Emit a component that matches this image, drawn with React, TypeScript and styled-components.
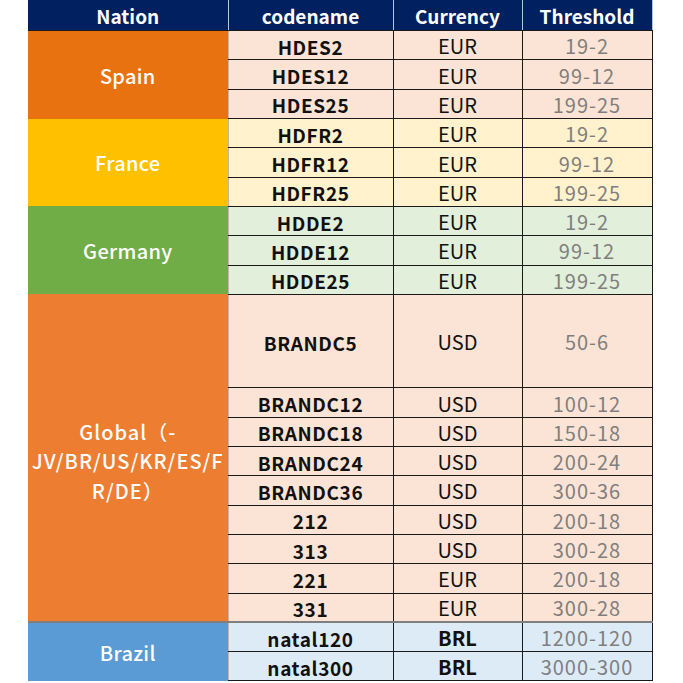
import React from "react";
import styled, { createGlobalStyle } from "styled-components";

const Global = createGlobalStyle`
  html, body { margin: 0; padding: 0; background: #ffffff; }
  body { font-family: "Noto Sans CJK SC", "Noto Sans", sans-serif; }
`;

type RowData = { code: string; cur: string; th: string; tall?: boolean };
type Group = {
  name: React.ReactNode;
  color: string;
  bg: string;
  boldCur?: boolean;
  lastSep?: boolean;
  wide?: boolean;
  rows: RowData[];
};

const groups: Group[] = [
  {
    name: "Spain",
    color: "#E8720F",
    bg: "#FBE4D5",
    rows: [
      { code: "HDES2", cur: "EUR", th: "19-2" },
      { code: "HDES12", cur: "EUR", th: "99-12" },
      { code: "HDES25", cur: "EUR", th: "199-25" },
    ],
  },
  {
    name: "France",
    color: "#FFC000",
    bg: "#FFF2CC",
    rows: [
      { code: "HDFR2", cur: "EUR", th: "19-2" },
      { code: "HDFR12", cur: "EUR", th: "99-12" },
      { code: "HDFR25", cur: "EUR", th: "199-25" },
    ],
  },
  {
    name: "Germany",
    color: "#70AD47",
    bg: "#E2EFDA",
    rows: [
      { code: "HDDE2", cur: "EUR", th: "19-2" },
      { code: "HDDE12", cur: "EUR", th: "99-12" },
      { code: "HDDE25", cur: "EUR", th: "199-25" },
    ],
  },
  {
    name: (
      <>
        Global（-
        <br />
        JV/BR/US/KR/ES/F
        <br />
        R/DE）
      </>
    ),
    color: "#ED7D31",
    bg: "#FBE4D5",
    lastSep: true,
    wide: true,
    rows: [
      { code: "BRANDC5", cur: "USD", th: "50-6", tall: true },
      { code: "BRANDC12", cur: "USD", th: "100-12" },
      { code: "BRANDC18", cur: "USD", th: "150-18" },
      { code: "BRANDC24", cur: "USD", th: "200-24" },
      { code: "BRANDC36", cur: "USD", th: "300-36" },
      { code: "212", cur: "USD", th: "200-18" },
      { code: "313", cur: "USD", th: "300-28" },
      { code: "221", cur: "EUR", th: "200-18" },
      { code: "331", cur: "EUR", th: "300-28" },
    ],
  },
  {
    name: "Brazil",
    color: "#5B9BD5",
    bg: "#DDEBF7",
    boldCur: true,
    rows: [
      { code: "natal120", cur: "BRL", th: "1200-120" },
      { code: "natal300", cur: "BRL", th: "3000-300" },
    ],
  },
];

const Page = styled.div`
  padding-left: 28px;
`;

const Table = styled.table`
  border-collapse: collapse;
  table-layout: fixed;
  width: 624px;
`;

const HeadRow = styled.tr`
  height: 30.7px;
`;

const Th = styled.th`
  background: #002060;
  color: #ffffff;
  font-size: 19px;
  font-weight: 700;
  padding: 1px 0 0;
  line-height: 1;
  text-align: center;
  vertical-align: middle;
  border-right: 1px solid #b4c7e7;
  border-bottom: 1px solid #1a1a1a;
`;

const Row = styled.tr<{ $tall?: boolean }>`
  height: ${(p) => (p.$tall ? "93.6px" : "29.3px")};
`;

const NationCell = styled.td<{ $bg: string; $sep?: boolean }>`
  background: ${(p) => p.$bg};
  color: #ffffff;
  font-size: 20px;
  font-weight: 500;
  line-height: 29.5px;
  text-align: center;
  vertical-align: middle;
  padding: 0;
  border-bottom: ${(p) => (p.$sep ? "2px solid #7f7f7f" : "none")};
`;

const NationLabel = styled.div<{ $wide?: boolean }>`
  letter-spacing: ${(p) => (p.$wide ? "1px" : "0.3px")};
  padding-top: ${(p) => (p.$wide ? "6px" : "1px")};
  white-space: nowrap;
`;

const Td = styled.td<{
  $bg: string;
  $sep?: boolean;
  $first?: boolean;
}>`
  background: ${(p) => p.$bg};
  line-height: 1;
  text-align: center;
  vertical-align: middle;
  padding: 2px 0 0;
  border-right: 1px solid #1a1a1a;
  border-left: ${(p) => (p.$first ? "1px solid #c9b3a6" : "1px solid #1a1a1a")};
  border-bottom: ${(p) => (p.$sep ? "2px solid #7f7f7f" : "1px solid #1a1a1a")};
`;

const Code = styled.span`
  color: #111111;
  font-size: 19px;
  font-weight: 700;
  letter-spacing: 0.6px;
`;

const Currency = styled.span<{ $bold?: boolean }>`
  color: #111111;
  font-size: 20px;
  font-weight: ${(p) => (p.$bold ? 700 : 400)};
`;

const Threshold = styled.span`
  color: #7f7f7f;
  font-size: 20px;
  font-weight: 400;
  letter-spacing: 1px;
`;

export default function App() {
  return (
    <Page>
      <Global />
      <Table>
        <colgroup>
          <col style={{ width: 200 }} />
          <col style={{ width: 165 }} />
          <col style={{ width: 129 }} />
          <col style={{ width: 130 }} />
        </colgroup>
        <thead>
          <HeadRow>
            <Th>Nation</Th>
            <Th>codename</Th>
            <Th>Currency</Th>
            <Th>Threshold</Th>
          </HeadRow>
        </thead>
        <tbody>
          {groups.map((g, gi) =>
            g.rows.map((r, ri) => {
              const sep = g.lastSep && ri === g.rows.length - 1;
              return (
                <Row key={`${gi}-${ri}`} $tall={r.tall}>
                  {ri === 0 && (
                    <NationCell rowSpan={g.rows.length} $bg={g.color} $sep={g.lastSep}>
                      <NationLabel $wide={g.wide}>{g.name}</NationLabel>
                    </NationCell>
                  )}
                  <Td $bg={g.bg} $first $sep={sep}>
                    <Code>{r.code}</Code>
                  </Td>
                  <Td $bg={g.bg} $sep={sep}>
                    <Currency $bold={g.boldCur}>{r.cur}</Currency>
                  </Td>
                  <Td $bg={g.bg} $sep={sep}>
                    <Threshold>{r.th}</Threshold>
                  </Td>
                </Row>
              );
            })
          )}
        </tbody>
      </Table>
    </Page>
  );
}
